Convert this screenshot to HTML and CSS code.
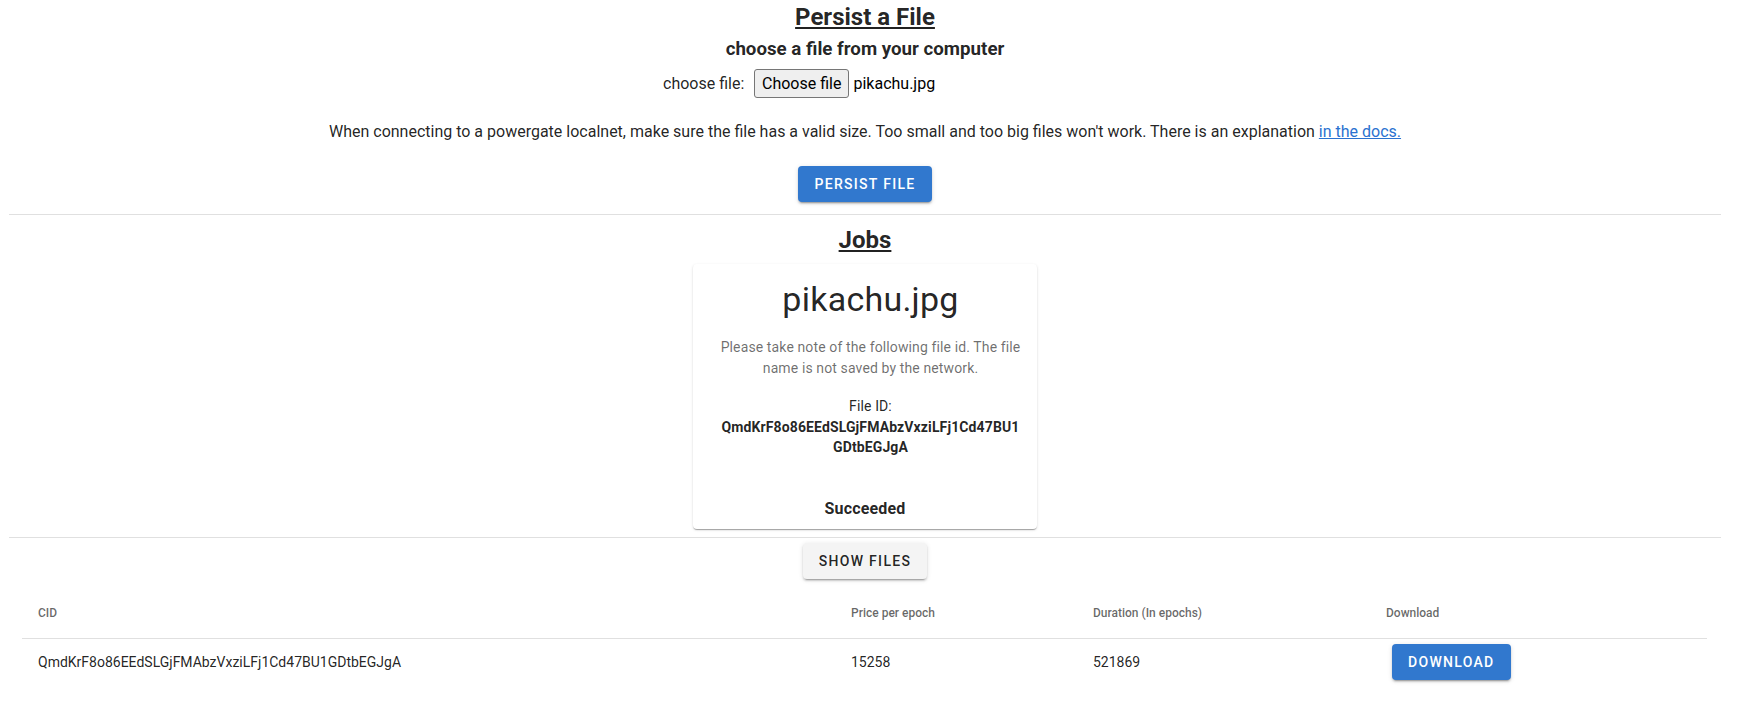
FILE: index.html
```html
<!DOCTYPE html>
<html lang="en">
<head>
<meta charset="utf-8">
<title>Persist a File</title>
<link rel="stylesheet" href="styles.css">
</head>
<body>
<div class="page">
  <section class="persist">
    <h2 class="title">Persist a File</h2>
    <h3 class="subtitle">choose a file from your computer</h3>
    <div class="file-row">
      <label class="file-label">choose file:</label>
      <div class="file-input">
        <span class="file-btn">Choose file</span>
        <span class="file-name">pikachu.jpg</span>
      </div>
    </div>
    <p class="note">When connecting to a powergate localnet, make sure the file has a valid size. Too small and too big files won't work. There is an explanation <a class="link" href="#">in the docs.</a></p>
    <button class="btn btn-primary" type="button">Persist file</button>
  </section>

  <hr class="divider divider-top">

  <section class="jobs">
    <h2 class="title jobs-title">Jobs</h2>
    <div class="card">
      <div class="card-body">
        <div class="card-name">pikachu.jpg</div>
        <p class="card-hint">Please take note of the following file id. The file name is not saved by the network.</p>
        <div class="card-id-label">File ID:</div>
        <div class="card-id">QmdKrF8o86EEdSLGjFMAbzVxziLFj1Cd47BU1GDtbEGJgA</div>
      </div>
      <div class="card-status">Succeeded</div>
    </div>
  </section>

  <hr class="divider divider-bottom">

  <div class="show-row">
    <button class="btn btn-default" type="button">Show files</button>
  </div>

  <table class="files">
    <thead>
      <tr>
        <th class="col-cid">CID</th>
        <th class="col-price">Price per epoch</th>
        <th class="col-duration">Duration (In epochs)</th>
        <th class="col-download">Download</th>
      </tr>
    </thead>
    <tbody>
      <tr>
        <td>QmdKrF8o86EEdSLGjFMAbzVxziLFj1Cd47BU1GDtbEGJgA</td>
        <td>15258</td>
        <td>521869</td>
        <td><button class="btn btn-primary btn-download" type="button">Download</button></td>
      </tr>
    </tbody>
  </table>
</div>
</body>
</html>
```

FILE: styles.css
```css
* {
  box-sizing: border-box;
}

html, body {
  margin: 0;
  padding: 0;
  background: #ffffff;
}

body {
  font-family: Roboto, "Liberation Sans", Arial, sans-serif;
  color: rgba(0, 0, 0, 0.87);
  font-size: 16px;
}

.page {
  padding: 0 19px 0 9px;
}

.persist,
.jobs {
  display: flex;
  flex-direction: column;
  align-items: center;
}

.title {
  margin: 3px 0 0;
  font-size: 24px;
  line-height: 28px;
  font-weight: 700;
  text-decoration: underline;
  text-underline-offset: 2px;
  text-decoration-thickness: 2px;
}

.subtitle {
  margin: 7px 0 0;
  font-size: 18.72px;
  line-height: 22px;
  font-weight: 700;
}

.file-row {
  margin-top: 9px;
  height: 29px;
  display: flex;
  align-items: center;
}

.file-label {
  width: 82px;
  margin-right: 9px;
  font-size: 16px;
}

.file-input {
  width: 313px;
  display: flex;
  align-items: center;
}

.file-btn {
  height: 29px;
  padding: 0 7px;
  display: flex;
  align-items: center;
  background: #efefef;
  border: 1px solid #767676;
  border-radius: 3px;
  color: #000;
  font-size: 16px;
}

.file-name {
  margin-left: 4px;
  color: #000;
  font-size: 16px;
}

.note {
  margin: 22px 0 0;
  font-size: 16px;
  line-height: 24px;
}

.link {
  color: #2a72d0;
  text-decoration: underline;
}

.btn {
  font-family: Roboto, "Liberation Sans", Arial, sans-serif;
  font-size: 14px;
  font-weight: 500;
  line-height: 24px;
  letter-spacing: 1.3px;
  text-transform: uppercase;
  padding: 6px 16px;
  border: 0;
  border-radius: 4px;
  cursor: pointer;
  box-shadow: 0px 3px 1px -2px rgba(0, 0, 0, 0.2), 0px 2px 2px 0px rgba(0, 0, 0, 0.14), 0px 1px 5px 0px rgba(0, 0, 0, 0.12);
}

.btn-primary {
  background: #3178ce;
  color: #ffffff;
}

.persist .btn-primary {
  margin-top: 22px;
}

.btn-default {
  background: #f4f4f4;
  color: rgba(0, 0, 0, 0.87);
}

.divider {
  border: 0;
  height: 1px;
  background: #e0e0e0;
  margin: 0;
}

.divider-top {
  margin-top: 12px;
}

.jobs-title {
  margin-top: 11px;
}

.card {
  margin-top: 10px;
  width: 344px;
  height: 265px;
  padding: 15px 0 8px;
  background: #fff;
  border-radius: 4px;
  box-shadow: 0px 2px 1px -1px rgba(0, 0, 0, 0.2), 0px 1px 1px 0px rgba(0, 0, 0, 0.14), 0px 1px 3px 0px rgba(0, 0, 0, 0.12);
  text-align: center;
  display: flex;
  flex-direction: column;
}

.card-body {
  padding: 0 16px 0 27px;
  display: flex;
  flex-direction: column;
  align-items: center;
}

.card-name {
  font-size: 34px;
  line-height: 40px;
  font-weight: 400;
  letter-spacing: 0.25px;
}

.card-hint {
  margin: 18px 0 0;
  font-size: 14px;
  line-height: 21px;
  letter-spacing: 0.12px;
  color: rgba(0, 0, 0, 0.58);
}

.card-id-label {
  margin-top: 17px;
  font-size: 14px;
  line-height: 20px;
  letter-spacing: 0.12px;
}

.card-id {
  margin-top: 1px;
  font-size: 14px;
  line-height: 20px;
  font-weight: 700;
  letter-spacing: 0.12px;
  word-break: break-all;
}

.card-status {
  margin-top: auto;
  font-size: 16px;
  line-height: 24px;
  font-weight: 700;
  letter-spacing: 0.15px;
}

.divider-bottom {
  margin-top: 8px;
}

.show-row {
  margin-top: 5px;
  display: flex;
  justify-content: center;
}

.files {
  margin: 6px 14px 0 13px;
  width: calc(100% - 27px);
  border-collapse: collapse;
  table-layout: fixed;
}

.files th {
  text-align: left;
  font-size: 12px;
  line-height: 24px;
  font-weight: 500;
  color: rgba(0, 0, 0, 0.6);
  padding: 16px 16px 13px;
  border-bottom: 1px solid #e0e0e0;
}

.files td {
  text-align: left;
  font-size: 14px;
  line-height: 20px;
  padding: 5px 16px 6px;
  vertical-align: middle;
}

.col-cid {
  width: 813px;
}

.col-price {
  width: 242px;
}

.col-duration {
  width: 293px;
}

.col-download {
  width: 337px;
}

.btn-download {
  margin-left: 6px;
}
```
